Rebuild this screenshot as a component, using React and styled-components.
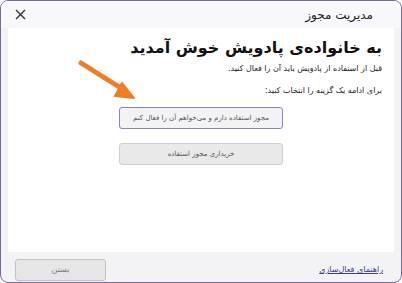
import React from 'react';
import styled, { createGlobalStyle } from 'styled-components';

const Global = createGlobalStyle`
  html, body { margin: 0; padding: 0; background: #ffffff; }
  * { box-sizing: border-box; }
`;

const Window = styled.div`
  position: relative;
  width: 402px;
  height: 283px;
  border: 1px solid #7a6a9c;
  border-radius: 8px;
  background: #f3f3f6;
  display: flex;
  flex-direction: column;
  overflow: hidden;
  font-family: "DejaVu Sans", sans-serif;
`;

const TitleBar = styled.div`
  height: 27px;
  display: flex;
  align-items: center;
  justify-content: space-between;
  padding: 0 28px 0 13px;
  background: #f8f7fb;
`;

const Title = styled.div`
  direction: rtl;
  font-size: 12px;
  color: #222;
`;

const Close = styled.div`
  width: 12px;
  height: 12px;
  display: flex;
  align-items: center;
  justify-content: center;
`;

const Panel = styled.div`
  flex: 1;
  margin: 0 7px;
  background: #ffffff;
  border-radius: 3px;
  direction: rtl;
  padding: 7px 12px 0 12px;
  display: flex;
  flex-direction: column;
`;

const Heading = styled.h1`
  margin: 0;
  font-size: 16px;
  font-weight: bold;
  color: #111;
  line-height: 26px;
`;

const Para = styled.p`
  margin: ${p => p.$top}px 0 0 0;
  font-size: 8px;
  color: #222;
  line-height: 12px;
`;

const Options = styled.div`
  display: flex;
  flex-direction: column;
  align-items: center;
  gap: 14px;
  margin-top: 10px;
`;

const OptionButton = styled.button`
  width: 164px;
  height: 22px;
  border-radius: 3px;
  border: 1px solid ${p => (p.$active ? '#8a86b8' : '#cfcfcf')};
  background: ${p => (p.$active ? '#f3f3f5' : '#e9e9e9')};
  font-family: "DejaVu Sans", sans-serif;
  font-size: 7px;
  color: #555;
  direction: rtl;
  padding: 0;
`;

const Footer = styled.div`
  height: 30px;
  display: flex;
  align-items: center;
  justify-content: space-between;
  padding: 5px 18px 0 14px;
  direction: rtl;
`;

const HelpLink = styled.a`
  font-size: 8px;
  color: #3b3a9a;
  text-decoration: underline;
`;

const CloseButton = styled.button`
  width: 91px;
  height: 22px;
  border: 1px solid #c2c2c2;
  border-radius: 3px;
  background: #e6e6e6;
  font-family: "DejaVu Sans", sans-serif;
  font-size: 8px;
  color: #777;
`;

const Arrow = styled.svg`
  position: absolute;
  left: 74px;
  top: 56px;
`;

export default function App() {
  return (
    <>
      <Global />
      <Window>
        <TitleBar>
          <Close>
            <svg width="11" height="11" viewBox="0 0 11 11">
              <path d="M1 1 L10 10 M10 1 L1 10" stroke="#333" strokeWidth="1.4" />
            </svg>
          </Close>
          <Title>مدیریت مجوز</Title>
        </TitleBar>
        <Panel>
          <Heading>به خانواده‌ی پادویش خوش آمدید</Heading>
          <Para $top={2}>قبل از استفاده از پادویش باید آن را فعال کنید.</Para>
          <Para $top={10}>برای ادامه یک گزینه را انتخاب کنید:</Para>
          <Options>
            <OptionButton $active>مجوز استفاده دارم و می‌خواهم آن را فعال کنم</OptionButton>
            <OptionButton>خریداری مجوز استفاده</OptionButton>
          </Options>
        </Panel>
        <Footer>
          <HelpLink href="#">راهنمای فعال‌سازی</HelpLink>
          <CloseButton>بستن</CloseButton>
        </Footer>
        <Arrow width="64" height="46" viewBox="0 0 64 46">
          <path d="M6 6 L49 33" stroke="#f07e22" strokeWidth="5" strokeLinecap="round" />
          <path d="M59 41 L40 39 L47 26 Z" fill="#f07e22" stroke="#f07e22" strokeWidth="2" strokeLinejoin="round" />
        </Arrow>
      </Window>
    </>
  );
}
